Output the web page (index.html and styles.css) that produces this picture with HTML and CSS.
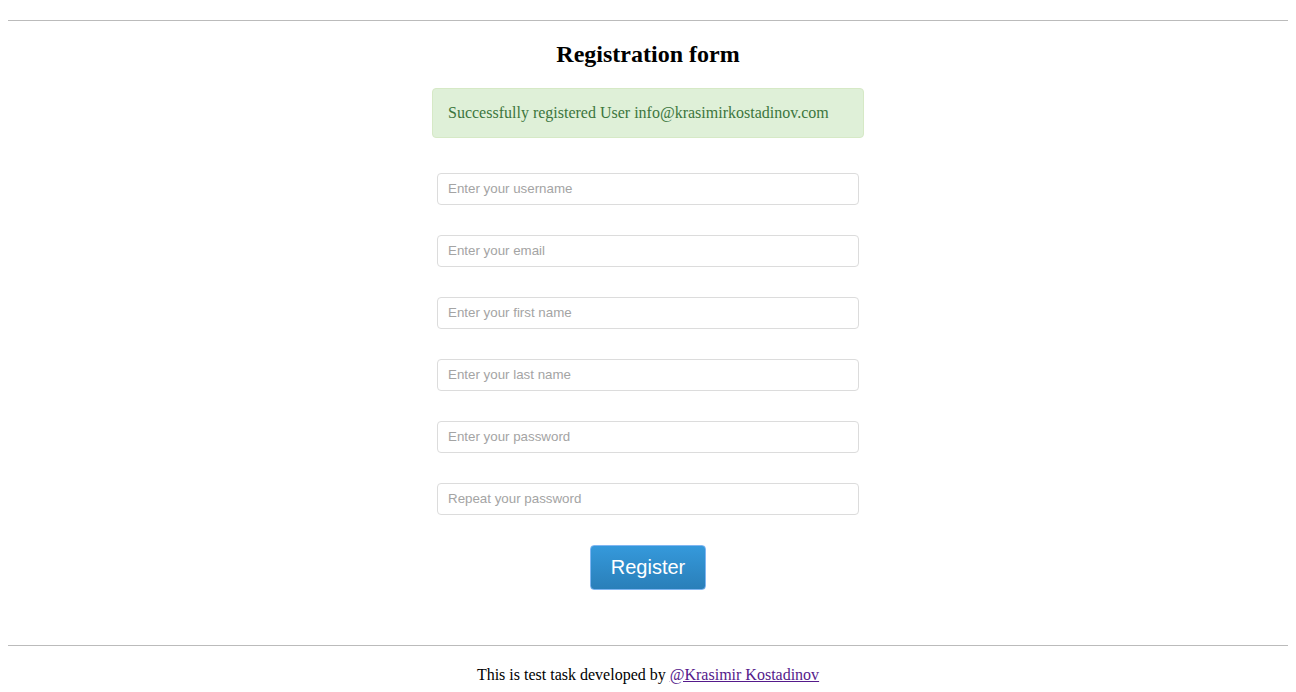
FILE: index.html
```html
<!DOCTYPE html>
<html>
<head>
<meta charset="utf-8">
<link rel="stylesheet" href="styles.css">
</head>
<body>
<hr class="rule rule-top">
<main class="page">
  <h2 class="title">Registration form</h2>
  <div class="alert">Successfully registered User info@krasimirkostadinov.com</div>
  <form class="form">
    <input class="field" type="text" placeholder="Enter your username">
    <input class="field" type="text" placeholder="Enter your email">
    <input class="field" type="text" placeholder="Enter your first name">
    <input class="field" type="text" placeholder="Enter your last name">
    <input class="field" type="password" placeholder="Enter your password">
    <input class="field" type="password" placeholder="Repeat your password">
    <button class="btn" type="button">Register</button>
  </form>
</main>
<hr class="rule rule-bottom">
<footer class="footer">This is test task developed by <a class="link" href="#">@Krasimir Kostadinov</a></footer>
</body>
</html>
```
FILE: styles.css
```css
html, body {
  background: #fff;
}
body {
  margin: 8px;
  font-family: "Liberation Serif", "Times New Roman", serif;
  font-size: 16px;
  color: #000;
}
.rule {
  border: 0;
  border-top: 1px solid #bbb;
  height: 0;
  margin: 0;
}
.rule-top {
  margin-top: 12px;
}
.page {
  width: 432px;
  margin: 0 auto;
  display: flex;
  flex-direction: column;
  align-items: stretch;
}
.title {
  margin: 19px 0 0;
  font-size: 24px;
  font-weight: bold;
  text-align: center;
  line-height: 28px;
}
.alert {
  margin-top: 20px;
  height: 50px;
  box-sizing: border-box;
  padding: 0 15px;
  display: flex;
  align-items: center;
  background: #dff0d8;
  border: 1px solid #d6e9c6;
  border-radius: 4px;
  color: #3c763d;
  font-size: 16px;
}
.form {
  margin: 35px 0 0;
  padding: 0 5px;
  display: flex;
  flex-direction: column;
  gap: 30px;
  align-items: stretch;
}
.field {
  height: 32px;
  box-sizing: border-box;
  border: 1px solid #dcdcdc;
  border-radius: 4px;
  padding: 0 10px 2px;
  font-family: "Liberation Sans", Arial, sans-serif;
  font-size: 13.33px;
  color: #333;
  background: #fff;
  outline: none;
}
.field::placeholder {
  color: #a4a4a4;
}
.btn {
  align-self: center;
  width: 116px;
  height: 45px;
  box-sizing: border-box;
  border: 1px solid #80b6f2;
  border-radius: 4px;
  background: linear-gradient(#3599db, #2a7fb9);
  color: #fff;
  font-family: "Liberation Sans", Arial, sans-serif;
  font-size: 20px;
  padding: 0;
  cursor: pointer;
}
.rule-bottom {
  margin-top: 55px;
}
.footer {
  text-align: center;
  margin-top: 19px;
  font-size: 16px;
  line-height: 20px;
}
.link {
  color: #551a8b;
}
```
